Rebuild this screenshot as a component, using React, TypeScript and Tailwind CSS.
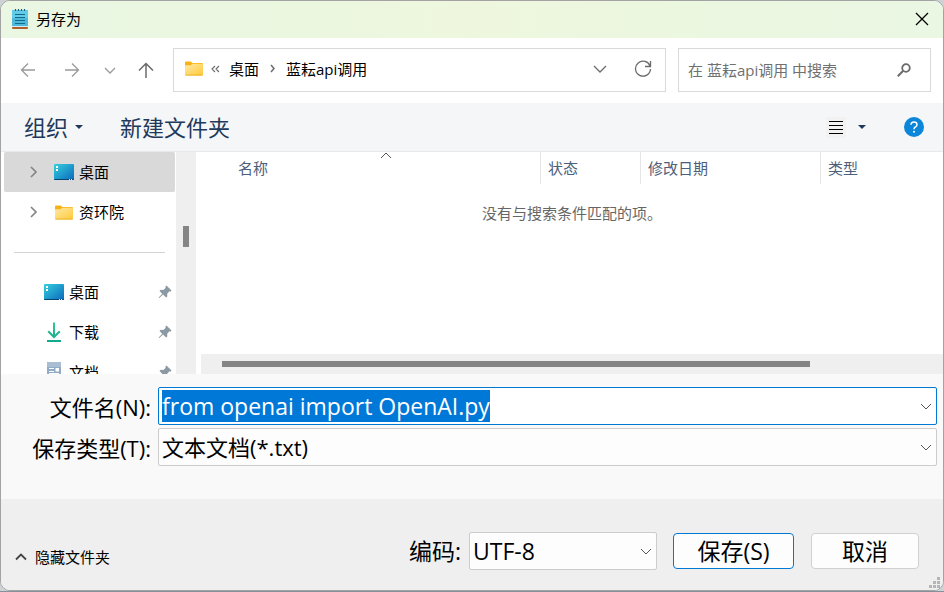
import { useEffect, useRef, useState, type ReactNode } from "react";

const UI_FONT = "font-['Open_Sans','Noto_Sans_CJK_SC',sans-serif]";

type StrokeIconProps = {
  d: string;
  box?: string;
  className: string;
  width?: number;
};

function StrokeIcon({ d, box = "0 0 16 16", className, width = 1.3 }: StrokeIconProps) {
  return (
    <svg viewBox={box} fill="none" stroke="currentColor" strokeWidth={width} className={className} aria-hidden="true">
      <path d={d} />
    </svg>
  );
}

function NotepadIcon() {
  return (
    <svg viewBox="0 0 16 20" className="h-5 w-4 shrink-0" aria-hidden="true">
      <rect x="0" y="1" width="16" height="18" rx="1" fill="#4fb9dc" />
      <rect x="0" y="1" width="16" height="8" rx="1" fill="#62cbe8" />
      <rect x="0" y="18" width="16" height="2" rx="1" fill="#b0602c" />
      <path d="M0 17.5h16" stroke="#d5eef5" />
      <path d="M3.5 0v2M6.5 0v2M9.5 0v2M12.5 0v2" stroke="#155f7d" strokeWidth="1.2" />
      <path d="M3 5.5h10M3 8.5h10M3 11.5h10M3 14.5h10" stroke="#11698b" strokeWidth="1.2" />
    </svg>
  );
}

function FolderIcon() {
  return (
    <svg viewBox="0 0 18 15" className="h-[15px] w-[18px] shrink-0" aria-hidden="true">
      <defs>
        <linearGradient id="folder" x1="0" y1="0" x2="1" y2="1">
          <stop offset="0" stopColor="#ffe9a6" />
          <stop offset="1" stopColor="#ffc938" />
        </linearGradient>
      </defs>
      <path d="M0 1.5Q0 .5 1 .5H5.5L7.5 2H17Q18 2 18 3V6H0Z" fill="#f9b115" />
      <path d="M0 5Q0 4.2 .8 4.2H5.5L7.5 2.8H17.2Q18 2.8 18 3.6V13.5Q18 14.5 17 14.5H1Q0 14.5 0 13.5Z" fill="url(#folder)" />
      <path d="M.5 14.1h17" stroke="#eba715" strokeWidth=".8" />
    </svg>
  );
}

function DesktopIcon() {
  return (
    <svg viewBox="0 0 20 16" className="h-4 w-5 shrink-0" aria-hidden="true">
      <defs>
        <linearGradient id="desktop" x1="0" y1="0" x2="1" y2="1">
          <stop offset="0" stopColor="#35cfdd" />
          <stop offset="1" stopColor="#0b69bd" />
        </linearGradient>
      </defs>
      <rect width="20" height="16" rx="1" fill="url(#desktop)" />
      <path d="M0 15h20v0q0 1-1 1H1q-1 0-1-1Z" fill="#08446f" />
      <path d="M2 2h2v2H2zM2 5h2v2H2z" fill="#fff" />
      <path d="M15 15h1v1h-1zM17 15h1v1h-1z" fill="#d8ecfa" />
    </svg>
  );
}

function DownloadIcon() {
  return (
    <svg viewBox="0 0 20 20" className="size-5 shrink-0" fill="none" aria-hidden="true">
      <defs>
        <linearGradient id="download" x1="0" y1="0" x2="0" y2="20" gradientUnits="userSpaceOnUse">
          <stop offset="0" stopColor="#36c98a" />
          <stop offset="1" stopColor="#10a98f" />
        </linearGradient>
      </defs>
      <path d="M10 .5V15M4.2 9.2 10 15l5.8-5.8M3 19h14" stroke="url(#download)" strokeWidth="2" />
    </svg>
  );
}

function DocumentIcon() {
  return (
    <svg viewBox="0 0 20 20" className="size-5 shrink-0" aria-hidden="true">
      <rect x="3" y="0" width="14" height="20" rx="1" fill="#92abc6" />
      <path d="M3 1q0-1 1-1h12q1 0 1 1v4H3Z" fill="#a9bdd3" />
      <path d="M5 6.500h5M5 9.500h5M5 11.500h10" stroke="#fff" strokeWidth="1.2" />
      <rect x="11.500" y="6" width="3.500" height="3.500" fill="#fff" />
    </svg>
  );
}

function PinIcon() {
  return (
    <svg viewBox="0 0 14 14" className="size-3.5 shrink-0" aria-hidden="true">
      <path
        d="M8.500.5 13.500 5.500 12.300 6.700 11.400 6.300 9.200 8.800 9.300 11.500 8.100 12.600 5 9.500 1.300 13 .6 12.800.9 12.200 4.200 8.700 1.500 6 2.700 4.800 5.400 4.900 7.700 2.700 7.300 1.700Z"
        fill="#8d99a2"
      />
    </svg>
  );
}

function HelpIcon() {
  return (
    <svg viewBox="0 0 20 20" className="size-5" fill="none" aria-hidden="true">
      <circle cx="10" cy="10" r="10" fill="#0c86d8" />
      <path d="M7 7.700Q7 4.900 10 4.900T13 7.500Q13 8.900 11.500 9.900T10 12.200" stroke="#fff" strokeWidth="1.500" />
      <circle cx="10" cy="14.700" r="1" fill="#fff" />
    </svg>
  );
}

function Caret() {
  return (
    <svg viewBox="0 0 8 4" className="h-1 w-2" aria-hidden="true">
      <path d="M0 0h8L4 4Z" fill="#1e395b" />
    </svg>
  );
}

const CHEVRON_DOWN = "M1 4 6 9 11 4";

function NavPane() {
  return (
    <nav aria-label="文件夹" className="w-[175px] shrink-0 overflow-hidden pr-px pl-[3px]">
      <TreeItem icon={<DesktopIcon />} label="桌面" selected />
      <TreeItem icon={<FolderIcon />} label="资环院" />
      <hr className="mx-2.5 mt-5 mb-[19px] border-[#d4d4d4]" />
      <PinnedItem icon={<DesktopIcon />} label="桌面" />
      <PinnedItem icon={<DownloadIcon />} label="下载" />
      <PinnedItem icon={<DocumentIcon />} label="文档" />
    </nav>
  );
}

function TreeItem({ icon, label, selected = false }: { icon: ReactNode; label: string; selected?: boolean }) {
  return (
    <button
      type="button"
      className={`flex h-10 w-full items-center rounded-xs pl-[23px] ${selected ? "bg-[#d9d9d9]" : "bg-white"}`}
    >
      <StrokeIcon d="M4 1 9 6 4 11" box="0 0 12 12" className="size-3 text-[#858585]" width={1.7} />
      <span className="ml-[15px] flex w-5 justify-center">{icon}</span>
      <span className="ml-[5px]">{label}</span>
    </button>
  );
}

function PinnedItem({ icon, label }: { icon: ReactNode; label: string }) {
  return (
    <button type="button" className="flex h-10 w-full items-center pr-[3px] pl-10">
      {icon}
      <span className="ml-[5px] flex-1 text-left">{label}</span>
      <PinIcon />
    </button>
  );
}

function FileList() {
  const head = "border-[#e5e5e5] p-0 pl-[7px] text-left font-normal";
  return (
    <section className="flex min-w-0 flex-1 flex-col pl-[5px]">
      <table className="w-full table-fixed border-separate border-spacing-0">
        <thead>
          <tr className="h-8 text-[#4c607a]">
            <th className="w-[339px] p-0 pl-[37px] text-left font-normal">
              <div className="relative">
                名称
                <StrokeIcon
                  d="M1 6 6 1 11 6"
                  box="0 0 12 7"
                  className="absolute -top-1.5 left-[142px] h-[7px] w-3 text-[#555]"
                  width={1}
                />
              </div>
            </th>
            <th className={`w-[100px] border-l ${head}`}>状态</th>
            <th className={`w-[180px] border-l ${head}`}>修改日期</th>
            <th className={`border-l ${head}`}>类型</th>
          </tr>
        </thead>
        <tbody>
          <tr>
            <td colSpan={4} className="h-[58px] p-0 text-center text-[#666]">
              没有与搜索条件匹配的项。
            </td>
          </tr>
        </tbody>
      </table>
      <div className="mt-auto flex h-5 items-center bg-[#efefef] pr-[133px] pl-[21px]">
        <div className="h-1.5 flex-1 bg-[#858585]" />
      </div>
    </section>
  );
}

export default function App() {
  const nameRef = useRef<HTMLInputElement>(null);
  const [fileName, setFileName] = useState("from openai import OpenAI.py");

  useEffect(() => {
    nameRef.current?.focus();
    nameRef.current?.select();
  }, []);

  const field = "h-[38px] w-full rounded-xs border pr-6 pl-[3px] text-black outline-none";

  return (
    <div className={`h-screen border-b border-[#87919b] bg-[#cfd2d5] text-[15px] leading-5 text-black ${UI_FONT}`}>
      <form
        aria-label="另存为"
        onSubmit={(e) => e.preventDefault()}
        className="flex h-full flex-col overflow-hidden rounded-[10px] border border-[#a3a3a3] bg-white"
      >
        <header className="flex h-[37px] shrink-0 items-center bg-linear-to-r from-[#e9f7e3] via-[#eef7de] to-[#eaf7e3] pr-3.5 pb-0.5 pl-[11px]">
          <NotepadIcon />
          <h1 className="ml-2 flex-1">另存为</h1>
          <button type="button" aria-label="关闭">
            <StrokeIcon d="M1 1 13 13M13 1 1 13" box="0 0 14 14" className="size-3.5" width={1.3} />
          </button>
        </header>

        <div className="flex h-[65px] shrink-0 items-center pr-3 pb-0.5 pl-[19px] text-[#6b6b6b]">
          <button type="button" aria-label="后退" className="text-[#9a9a9a]">
            <StrokeIcon d="M15 8H1.500M8 1.500 1.500 8 8 14.500" className="size-4" />
          </button>
          <button type="button" aria-label="前进" className="ml-7 text-[#9a9a9a]">
            <StrokeIcon d="M1 8H14.500M8 1.500 14.500 8 8 14.500" className="size-4" />
          </button>
          <button type="button" aria-label="最近浏览的位置" className="ml-6 text-[#9a9a9a]">
            <StrokeIcon d={CHEVRON_DOWN} box="0 0 12 12" className="size-3" width={1.3} />
          </button>
          <button type="button" aria-label="上移" className="ml-[22px]">
            <StrokeIcon d="M8 16V1.500M1 8.500 8 1.500 15 8.500" className="size-4" width={1.5} />
          </button>

          <div className="ml-[19px] flex h-11 flex-1 items-center border border-[#d9d9d9] pr-[13px] pb-0.5 pl-[11px]">
            <FolderIcon />
            <StrokeIcon d="M4 1 1 4 4 7M8 1 5 4 8 7" box="0 0 9 8" className="ml-2 h-2 w-[9px]" width={1.1} />
            <button type="button" className="ml-[9px] text-black">
              桌面
            </button>
            <StrokeIcon d="M1 1 4 4.500 1 8" box="0 0 6 9" className="ml-[11px] h-[9px] w-1.5" width={1.5} />
            <button type="button" className="ml-2.5 text-black">
              蓝耘api调用
            </button>
            <button type="button" aria-label="以前的位置" className="ml-auto">
              <StrokeIcon d="M1 4 7 10 13 4" box="0 0 14 14" className="size-3.5" />
            </button>
            <button type="button" aria-label="刷新" className="ml-[27px]">
              <StrokeIcon d="M16.200 6.500A7.500 7.500 0 1 0 16.500 9M16.500 1V6.500H11" box="0 0 18 18" className="size-[18px]" />
            </button>
          </div>

          <div className="ml-3 flex h-11 w-[253px] items-center border border-[#d9d9d9] pr-[19px] pl-[9px]">
            <input
              type="search"
              aria-label="搜索"
              placeholder="在 蓝耘api调用 中搜索"
              className="min-w-0 flex-1 outline-none placeholder:text-[#707070]"
            />
            <button type="button" aria-label="搜索">
              <svg viewBox="0 0 14 14" fill="none" stroke="currentColor" className="size-3.5" aria-hidden="true">
                <circle cx="9" cy="5" r="3.800" strokeWidth="1.800" />
                <path d="M6.200 7.800.8 13.200" strokeWidth="2" />
              </svg>
            </button>
          </div>
        </div>

        <div className="flex h-[49px] shrink-0 items-center border-b border-[#e9e9e9] bg-[#f4f6f8] pr-[19px] pl-[23px] text-[22px] leading-8 text-[#1e395b]">
          <button type="button" className="flex items-center gap-[7px]">
            组织
            <Caret />
          </button>
          <button type="button" className="ml-[37px]">
            新建文件夹
          </button>
          <button type="button" aria-label="更改视图" className="ml-auto bg-[#f2f2f2] p-[3px]">
            <StrokeIcon d="M0 1.500h14M0 5.500h14M0 9.500h14M0 13.500h14" box="0 0 14 15" className="h-[15px] w-3.5 text-black" width={1} />
          </button>
          <button type="button" aria-label="更多选项" className="ml-3">
            <Caret />
          </button>
          <button type="button" aria-label="帮助" className="ml-[38px]">
            <HelpIcon />
          </button>
        </div>

        <div className="flex min-h-0 flex-1">
          <NavPane />
          <div className="w-5 shrink-0 bg-[#efefef] pt-[74px]">
            <div className="mx-auto h-[21px] w-1.5 bg-[#858585]" />
          </div>
          <FileList />
        </div>

        <div className="grid shrink-0 grid-cols-[150px_1fr] items-center gap-x-[7px] gap-y-[3px] bg-[#f9f9f9] pt-[13px] pr-1.5 pb-[33px] text-[23px] leading-[30px]">
          <label htmlFor="file-name" className="pt-0.5 text-right text-[22px]">
            文件名(N):
          </label>
          <div className="relative">
            <input
              id="file-name"
              ref={nameRef}
              value={fileName}
              onChange={(e) => setFileName(e.target.value)}
              className={`${field} border-[#0078d4] bg-white selection:bg-[#0078d7] selection:text-white`}
            />
            <StrokeIcon d={CHEVRON_DOWN} box="0 0 12 12" className="absolute top-[13px] right-[5px] size-3 text-[#555]" width={1} />
          </div>
          <label htmlFor="file-type" className="pt-0.5 text-right text-[22px]">
            保存类型(T):
          </label>
          <div className="relative">
            <select id="file-type" className={`${field} appearance-none border-[#cccccc] bg-[#fdfdfd] text-[22px]`}>
              <option>文本文档(*.txt)</option>
            </select>
            <StrokeIcon d={CHEVRON_DOWN} box="0 0 12 12" className="absolute top-[13px] right-[5px] size-3 text-[#555]" width={1} />
          </div>
        </div>

        <footer className="relative flex h-[91px] shrink-0 items-center bg-[#efefef] pt-[13px] pr-6 pl-3.5 text-[23px] leading-[30px]">
          <button type="button" className="mt-3 flex items-center gap-2 text-[15px] leading-5">
            <StrokeIcon d="M1 8.500 6 3.500 11 8.500" box="0 0 12 12" className="size-3 text-[#444]" width={1.8} />
            隐藏文件夹
          </button>
          <label htmlFor="encoding" className="ml-auto">
            编码:
          </label>
          <div className="relative ml-2 w-[188px]">
            <select id="encoding" className={`${field} appearance-none border-[#cccccc] bg-[#fdfdfd]`}>
              <option>UTF-8</option>
            </select>
            <StrokeIcon d={CHEVRON_DOWN} box="0 0 12 12" className="absolute top-[13px] right-[5px] size-3 text-[#555]" width={1} />
          </div>
          <button type="submit" className="ml-4 h-9 w-[121px] rounded-sm border border-[#0078d4] bg-[#fdfdfd]">
            保存(S)
          </button>
          <button type="button" className="ml-[17px] h-9 w-[108px] rounded-sm border border-[#d0d0d0] bg-[#fdfdfd]">
            取消
          </button>
          <svg viewBox="0 0 11 11" className="absolute right-[3px] bottom-0.5 size-[11px]" aria-hidden="true">
            <path d="M8 0h3v3H8zM4 4h3v3H4zM8 4h3v3H8zM0 8h3v3H0zM4 8h3v3H4zM8 8h3v3H8z" fill="#b5b5b5" />
          </svg>
        </footer>
      </form>
    </div>
  );
}
